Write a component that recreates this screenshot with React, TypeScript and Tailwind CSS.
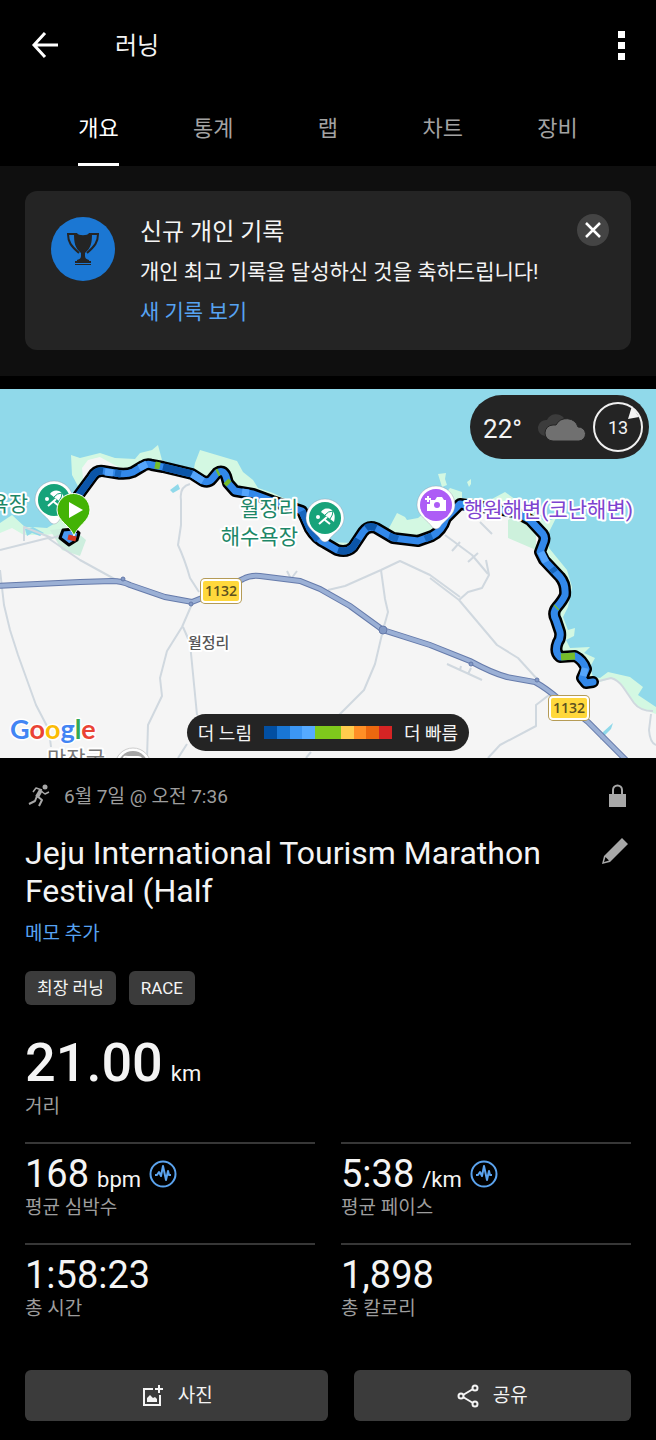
import type { ReactNode } from 'react';

const tabs = ['개요', '통계', '랩', '차트', '장비'];

const paceColors = [
  'bg-[#024fa2]',
  'bg-[#1976d4]',
  'bg-[#3c96f3]',
  'bg-[#55aaff]',
  'bg-[#7ec91c]',
  'bg-[#7ec91c]',
  'bg-[#ffcc4d]',
  'bg-[#ff8f26]',
  'bg-[#ec680f]',
  'bg-[#d62424]',
];

const stats = [
  { value: '168', unit: 'bpm', label: '평균 심박수', pulse: true },
  { value: '5:38', unit: '/km', label: '평균 페이스', pulse: true },
  { value: '1:58:23', unit: '', label: '총 시간', pulse: false },
  { value: '1,898', unit: '', label: '총 칼로리', pulse: false },
];

const route =
  'M78 496L92 477Q96 470 103 471L115 473Q126 475 133 472L143 466Q147 463 152 465L163 467L192 474L203 481Q209 483 212 479L217 473Q223 469 226 476L228 483L235 491L253 494L272 501L302 511L310 529Q316 539 325 543L337 550Q347 553 353 547L363 532Q368 525 376 528L393 538L418 541L432 536Q442 531 446 518L460 504L490 508L515 512L530 520L543 534Q546 538 543 544L540 552L544 560L560 577Q566 584 565 595Q563 600 557 607Q552 613 556 620L560 632Q561 638 558 642Q554 652 560 657L575 656Q583 660 586 669L582 678L586 683L593 682';

const coast =
  'M0 523L12 515L25 527L33 527L47 528L57 522L72 502L79 488L72 475L71 455L80 458L100 453L115 458L135 459L140 453L152 450L158 445L162 460L170 463L193 473L195 463L200 450L210 453L237 461L243 472L253 480L258 488L273 493L298 505L312 512L328 542L352 543L362 528L370 522L388 530L397 513L405 517L407 520L418 518L440 500L450 488L462 492L462 498L490 500L505 492L512 497L533 512L545 522L556 518L549 532L549 548L567 570L572 587L568 607L563 617L568 630L575 628L574 636L566 640L570 648L590 647L584 653L595 658L590 667L593 677L600 678L608 672L630 677L643 687L638 695L656 707V758H0Z';

const land =
  'M0 533L12 528L24 535L45 535L60 533L74 520L84 488L82 468L88 460L100 457L118 467L134 470L147 462L192 474L207 484L221 473L235 492L272 499L302 510L312 540L340 553L356 547L370 527L393 540L425 536L450 512L464 502L498 506L508 517L530 521L540 535L538 553L560 578L560 600L552 615L559 632L556 653L582 660L588 680L600 682L612 678L622 685L637 707L656 714V758H0Z';

const mainRoad =
  'M-4 586L80 582L112 581Q122 581 130 585L165 597L192 602L212 594L243 579Q250 575 260 576L300 581L320 589L350 606L383 630L430 645L470 661Q492 673 507 677L535 682Q546 688 560 700L588 722L626 760';

function PinShape({ x, y, color, children }: { x: number; y: number; color: string; children: ReactNode }) {
  return (
    <g transform={`translate(${x} ${y})`}>
      <path d="M-19 0A19 19 0 1 1 19 0C19 11 7 16 4 22Q0 26-4 22C-7 16-19 11-19 0Z" fill="#fff" stroke="#889" strokeOpacity=".35" />
      <circle r="16" fill={color} />
      {children}
    </g>
  );
}

function Umbrella() {
  return (
    <g stroke="#fff" fill="none">
      <path d="M-4-6C-1-12 13-11 9 4Z" fill="#fff" stroke="none" />
      <path d="M0-3Q3-7 8-7Q8-3 5 1" stroke="#17a37a" />
      <path d="M2-1L-6 6M0 2L5 6" strokeWidth="2" />
      <circle cx="-7" cy="-1" r="2" fill="#fff" stroke="none" />
    </g>
  );
}

function RoadShield({ x, y }: { x: number; y: number }) {
  return (
    <g transform={`translate(${x} ${y})`}>
      <rect width="42" height="26" rx="5" fill="#b59b55" />
      <rect x="1" y="1" width="40" height="24" rx="4" fill="#fff" />
      <rect x="3" y="3" width="36" height="20" rx="2" fill="#ffd83c" />
      <text x="21" y="18" textAnchor="middle" fontSize="14" fontWeight="600" fill="#5c5120" className="font-['Open_Sans',sans-serif]">
        1132
      </text>
    </g>
  );
}

function RouteMap() {
  return (
    <svg viewBox="0 389 656 369" className="block w-full" role="img" aria-label="러닝 경로 지도">
      <rect y="389" width="656" height="369" fill="#90d9ea" />
      <path d={coast} fill="#d3f8e2" />
      <path d={land} fill="#f5f5f5" />
      <path d="M508 520L520 512L536 530L536 550L508 538Z" fill="#cdf1dc" />
      <path d="M50 530L72 528L86 540L80 556L62 550Z" fill="#cdeede" />
      <path d="M25 529l8-2 11 6-4 3-8-3-5 3zM170 490l8-6 2 5-7 4zM600 740l3-8 10-9-2 6z" fill="#90d9ea" />
      <path d="M438 474l8-1-1 6 2 6-5 2zM467 482l4-3v5l-2 3z" fill="#d3f8e2" />

      {/* side roads */}
      <g fill="none" stroke="#d0d8df" strokeWidth="2" strokeLinejoin="round">
        <path d="M0 550L48 538L80 560L120 582M24 541V527L52 538L72 532" />
        <path d="M0 570L4 605L10 630L18 655L36 705L49 730L51 747" />
        <path d="M190 484Q179 487 181 500L181 525L178 545Q185 560 190 578L199 592" />
        <path d="M192 604L182 627L167 651L160 678L162 696L148 725L147 758M183 627L190 643L197 715M187 744L178 758" />
        <path d="M287 571L291 579L297 571M328 590L345 586L381 570L400 561L430 575L460 597" />
        <path d="M381 570L385 599L388 612L383 630L375 664L364 690L339 715M311 752L306 758" />
        <path d="M430 578L459 600L497 645L518 658L538 680M459 600L468 592L482 588L489 575L486 560" />
        <path d="M549 695L536 705V726L500 745L488 758" />
        <path d="M447 664L482 680M460 670l1-4M471 668l-3 6" />
        <path d="M445 535L472 555L488 574M452 551l8-9M468 562l10-9M480 522L492 534" />
        <path d="M595 682L611 678Q618 680 623 687L634 703Q640 711 653 711M651 714L649 730Q650 743 656 745" />
      </g>

      <path d={mainRoad} fill="none" stroke="#667bab" strokeWidth="6" />
      <path d={mainRoad} fill="none" stroke="#9bb0d5" strokeWidth="4" />
      <g fill="#8299c5" stroke="#667bab">
        <circle cx="123" cy="579" r="2" />
        <circle cx="191" cy="604" r="2" />
        <circle cx="383" cy="630" r="4" />
        <circle cx="471" cy="664" r="2" />
        <circle cx="537" cy="680" r="2" />
      </g>

      {/* recorded track, coloured by pace */}
      <g fill="none" strokeLinejoin="round">
        <path d="M63 530L60 538L69 545L77 540L79 533L74 529Z" fill="#4a98f0" stroke="#000" strokeWidth="3" />
        <path d="M68 537l8 2" stroke="#d4351f" strokeWidth="5" />
        <path d={route} stroke="#000" strokeWidth="12" strokeLinecap="round" />
        <path d={route} stroke="#3288ea" strokeWidth="7" strokeLinecap="round" />
      </g>
      <g fill="none" strokeWidth="7" strokeLinejoin="round">
        <path d="M78 496L92 477Q96 470 103 471M163 467L192 474M338 550Q347 553 353 547L358 539M366 528Q370 525 376 528" stroke="#0b55a8" />
        <path d="M115 473L121 474M302 511L310 529L318 540M389 536L398 539M425 539L432 536M552 568L555 572" stroke="#1767bf" />
        <path d="M105 472L113 473M139 468L147 464M192 474L203 481M242 492L249 493M541 552L546 562M585 668L583 676" stroke="#55a5fb" />
        <path d="M155 465L160 466M217 473L219 472M226 481L229 484M557 607L556 608M561 657L575 656" stroke="#76bc2a" />
      </g>

      <PinShape x={54} y={500} color="#17a37a"><Umbrella /></PinShape>
      <PinShape x={325} y={518} color="#17a37a"><Umbrella /></PinShape>
      <PinShape x={436} y={505} color="#ad5cf6">
        <path d="M-6-5H-1L1-8H6L8-5H10V6H-9V-1H-6Z" fill="#fff" />
        <circle cx="1" cy="0" r="3" fill="#ad5cf6" />
        <path d="M-8-9v6M-11-6h6" stroke="#fff" strokeWidth="2" />
      </PinShape>
      <path d="M74 536C71 526 57 521 57 510A16 16 0 0 1 90 510C90 521 77 526 74 536Z" fill="#43b305" stroke="#fff" />
      <path d="M69 502V518L83 510Z" fill="#fff" />

      <RoadShield x={200} y={578} />
      <RoadShield x={548} y={695} />

      <g stroke="#fff" strokeWidth="4" strokeLinejoin="round" paintOrder="stroke" fontSize="21">
        <text x="28" y="511" textAnchor="end" fill="#1d8767">해수욕장</text>
        <text x="298" y="516" textAnchor="end" fill="#1d8767">월정리</text>
        <text x="298" y="544" textAnchor="end" fill="#1d8767">해수욕장</text>
        <text x="464" y="517" fill="#7d43d0">행원해변(코난해변)</text>
        <text x="188" y="648" fontSize="15" fontWeight="500" fill="#555">월정리</text>
        <text x="47" y="766" fill="#777">만장굴</text>
      </g>
      <circle cx="133" cy="766" r="18" fill="#fff" stroke="#ccc" />
      <circle cx="133" cy="766" r="15" fill="#a5a5a5" />
      <path d="M124 762V758Q124 756 128 757H138Q142 757 142 762" fill="none" stroke="#fff" strokeWidth="2" />

      <text
        x="10"
        y="739"
        fontSize="27"
        fontWeight="700"
        stroke="#fff"
        strokeWidth="3"
        strokeLinejoin="round"
        paintOrder="stroke"
        className="font-[Lato,sans-serif]"
      >
        <tspan fill="#4285f4">G</tspan>
        <tspan fill="#ea4335">o</tspan>
        <tspan fill="#fbbc05">o</tspan>
        <tspan fill="#4285f4">g</tspan>
        <tspan fill="#34a853">l</tspan>
        <tspan fill="#ea4335">e</tspan>
      </text>
    </svg>
  );
}

function PulseIcon() {
  return (
    <svg width="28" height="28" viewBox="0 0 28 28" fill="none" stroke="#5ba3ee" strokeWidth="2" aria-hidden="true">
      <circle cx="14" cy="14" r="12.5" />
      <path d="M6 15h2l2-3 2 4 2-10 3 14 2-9 1 4h2" strokeLinejoin="round" />
    </svg>
  );
}

function Trophy() {
  return (
    <svg width="64" height="64" viewBox="0 0 64 64" className="mt-[5px] shrink-0" aria-hidden="true">
      <circle cx="32" cy="32" r="32" fill="#1b77d3" />
      <g fill="#242424">
        <path d="M23 16h3c1 3 11 3 12 0h3c0 10-1 15-7 20v3c0 2 1 3 4 4v1H26v-1c3-1 4-2 4-4v-3c-6-5-7-10-7-20Z" />
        <path d="M24 44h16v2H24zM24 47h16v1H24z" />
      </g>
      <path d="M24 17h-7c0 8 3 12 11 19M40 17h7c0 8-3 12-11 19" fill="none" stroke="#242424" strokeWidth="2" />
    </svg>
  );
}

export default function App() {
  return (
    <div className="min-h-screen bg-black font-[Roboto,'Noto_Sans_CJK_KR',sans-serif] text-[#f4f4f4]">
      {/* Header */}
      <header className="flex h-[90px] items-center pl-[31px] pr-[21px]">
        <button aria-label="뒤로" className="w-7">
          <svg width="28" height="28" viewBox="0 0 28 28" fill="none" stroke="#fff" strokeWidth="3">
            <path d="M14 2L3 14L14 26M3 14H27" />
          </svg>
        </button>
        <h1 className="ml-14 flex-1 pt-0.5 text-2xl">러닝</h1>
        <button aria-label="더보기" className="flex w-7 flex-col items-center gap-1">
          <span className="size-[7px] bg-white" />
          <span className="size-[7px] bg-white" />
          <span className="size-[7px] bg-white" />
        </button>
      </header>

      <nav className="grid h-[76px] grid-cols-5 justify-items-center px-[41px]">
        {tabs.map((tab, i) => (
          <button
            key={tab}
            className={`border-b-[3px] pt-1 text-[22px] ${i === 0 ? 'border-white text-white' : 'border-transparent text-[#a3a3a3]'}`}
          >
            {tab}
          </button>
        ))}
      </nav>

      {/* Personal record */}
      <section className="bg-[#0f0f0f] px-[25px] pb-[26px] pt-[25px]">
        <div className="flex items-start rounded-xl bg-[#242424] pb-[18px] pl-[26px] pr-[22px] pt-[21px]">
          <Trophy />
          <div className="ml-[25px] flex-1 text-[21px] leading-10">
            <h2 className="text-2xl leading-10">신규 개인 기록</h2>
            <p>개인 최고 기록을 달성하신 것을 축하드립니다!</p>
            <a href="#records" className="text-[#57a3f2]">새 기록 보기</a>
          </div>
          <button aria-label="닫기" className="mt-0.5 flex size-8 items-center justify-center rounded-full bg-[#444]">
            <svg width="16" height="16" viewBox="0 0 16 16" stroke="#fff" strokeWidth="2.5">
              <path d="M1 1L15 15M15 1L1 15" />
            </svg>
          </button>
        </div>
      </section>

      {/* Map */}
      <section className="relative mt-[13px] overflow-hidden">
        <RouteMap />
        <div className="absolute right-[7px] top-[6px] flex h-16 items-center rounded-full bg-[#242424] pl-[13px] pr-[6px]">
          <span className="pt-1 text-[26px]">22°</span>
          <svg width="50" height="30" viewBox="0 0 50 30" className="ml-3.5 mr-[7px] mt-0.5" aria-hidden="true">
            <path d="M9 23a8 8 0 1 1 2-16a10 10 0 0 1 17-2L20 22Z" fill="#3c3c3c" />
            <path d="M17 28a8 8 0 0 1 0-16h3A12 12 0 0 1 42 14a7 7 0 0 1 1 14Z" fill="#707070" stroke="#242424" />
          </svg>
          <div className="relative flex size-[50px] items-center justify-center">
            <svg viewBox="0 0 50 50" className="absolute inset-0" aria-hidden="true">
              <circle cx="25" cy="25" r="24" fill="none" stroke="#f0f0f0" strokeWidth="2" />
              <path d="M39 4L46 15L35 17Z" fill="#f4f4f4" />
            </svg>
            <span className="pt-0.5 text-lg">13</span>
          </div>
        </div>
        <div className="absolute inset-x-0 bottom-[7px] flex justify-center">
          <div className="flex h-[37px] items-center gap-3 rounded-full bg-[#242424] px-[11px] text-lg">
            <span className="pt-0.5">더 느림</span>
            <span className="flex h-[13px] w-32">
              {paceColors.map((color, i) => (
                <span key={i} className={`flex-1 ${color}`} />
              ))}
            </span>
            <span className="pt-0.5">더 빠름</span>
          </div>
        </div>
      </section>

      {/* Activity */}
      <main className="px-[25px] pb-5 pt-6">
        <div className="flex h-7 items-center text-[19px] text-[#9d9d9d]">
          <svg width="25" height="24" viewBox="0 0 25 24" fill="none" stroke="#a8a8a8" strokeLinejoin="round" aria-hidden="true">
            <circle cx="20" cy="3" r="2.5" fill="#a8a8a8" stroke="none" />
            <path d="M16 6L12 13" strokeWidth="4" />
            <path d="M17 6L11 4L8 8M16 7L20 10L24 8" strokeWidth="1.5" />
            <path d="M12 12L17 16L14 22M12 12L10 17L4 20" strokeWidth="2" />
          </svg>
          <span className="ml-3.5 flex-1 pt-0.5">6월 7일 @ 오전 7:36</span>
          <svg width="18" height="24" viewBox="0 0 18 24" className="mr-1" role="img" aria-label="비공개">
            <path d="M0 10H17V23H0Z" fill="#a8a8a8" />
            <path d="M4 11V6a4.500 4.500 0 0 1 9 0V11" fill="none" stroke="#a8a8a8" strokeWidth="2" />
          </svg>
        </div>

        <div className="mt-6 flex items-start justify-between">
          <h2 className="max-w-[540px] text-[32px] leading-[38px]">Jeju International Tourism Marathon Festival (Half</h2>
          <button aria-label="편집" className="mr-0.5 mt-[3px]">
            <svg width="28" height="28" viewBox="0 0 28 28" fill="#a8a8a8">
              <path d="M21 1L27 7L9 25L1 27L3 19ZM4.500 20L3 25L8 23.500Z" fillRule="evenodd" />
            </svg>
          </button>
        </div>
        <button className="mt-2.5 block text-[19px] leading-7 text-[#57a3f2]">메모 추가</button>

        <ul className="mt-[23px] flex gap-[13px] text-[17px] leading-[34px]">
          <li className="rounded-md bg-[#3b3b3b] px-3">최장 러닝</li>
          <li className="rounded-md bg-[#3b3b3b] px-3">RACE</li>
        </ul>

        <div className="mt-[26px]">
          <p className="flex h-16 items-baseline gap-2 text-[22px] leading-[64px]">
            <span className="text-[54px] font-medium">21.00</span>
            km
          </p>
          <p className="text-[19px] leading-6 text-[#9d9d9d]">거리</p>
        </div>

        <div className="mt-[23px] grid grid-cols-2 gap-x-[26px]">
          {stats.map((stat) => (
            <div key={stat.label} className="h-[101px] border-t-2 border-[#373737] pt-2">
              <p className="flex h-11 items-baseline gap-2 text-[22px] leading-[44px]">
                <span className="text-[38px]">{stat.value}</span>
                {stat.unit}
                {stat.pulse && (
                  <span className="self-center">
                    <PulseIcon />
                  </span>
                )}
              </p>
              <p className="text-[19px] leading-6 text-[#9d9d9d]">{stat.label}</p>
            </div>
          ))}
        </div>

        <div className="mt-[26px] grid grid-cols-[12fr_11fr] gap-[26px] text-[19px]">
          <button className="flex h-[51px] items-center justify-center gap-3.5 rounded-md bg-[#3b3b3b]">
            <svg width="24" height="24" viewBox="0 0 24 24" fill="none" stroke="#f4f4f4" strokeWidth="2" aria-hidden="true">
              <path d="M13 5H4V21H20V11M19 1V9M15 5H23" />
              <path d="M7 18V14L10 11L13 14L15 13L17 15V18Z" fill="#f4f4f4" stroke="none" />
            </svg>
            <span className="pt-0.5">사진</span>
          </button>
          <button className="flex h-[51px] items-center justify-center gap-3.5 rounded-md bg-[#3b3b3b]">
            <svg width="22" height="24" viewBox="0 0 22 24" fill="none" stroke="#f4f4f4" strokeWidth="2" aria-hidden="true">
              <circle cx="4" cy="12" r="2.5" />
              <circle cx="18" cy="4" r="2.5" />
              <circle cx="18" cy="20" r="2.5" />
              <path d="M6 11L16 5M6 13L16 19" />
            </svg>
            <span className="pt-0.5">공유</span>
          </button>
        </div>
      </main>
    </div>
  );
}
